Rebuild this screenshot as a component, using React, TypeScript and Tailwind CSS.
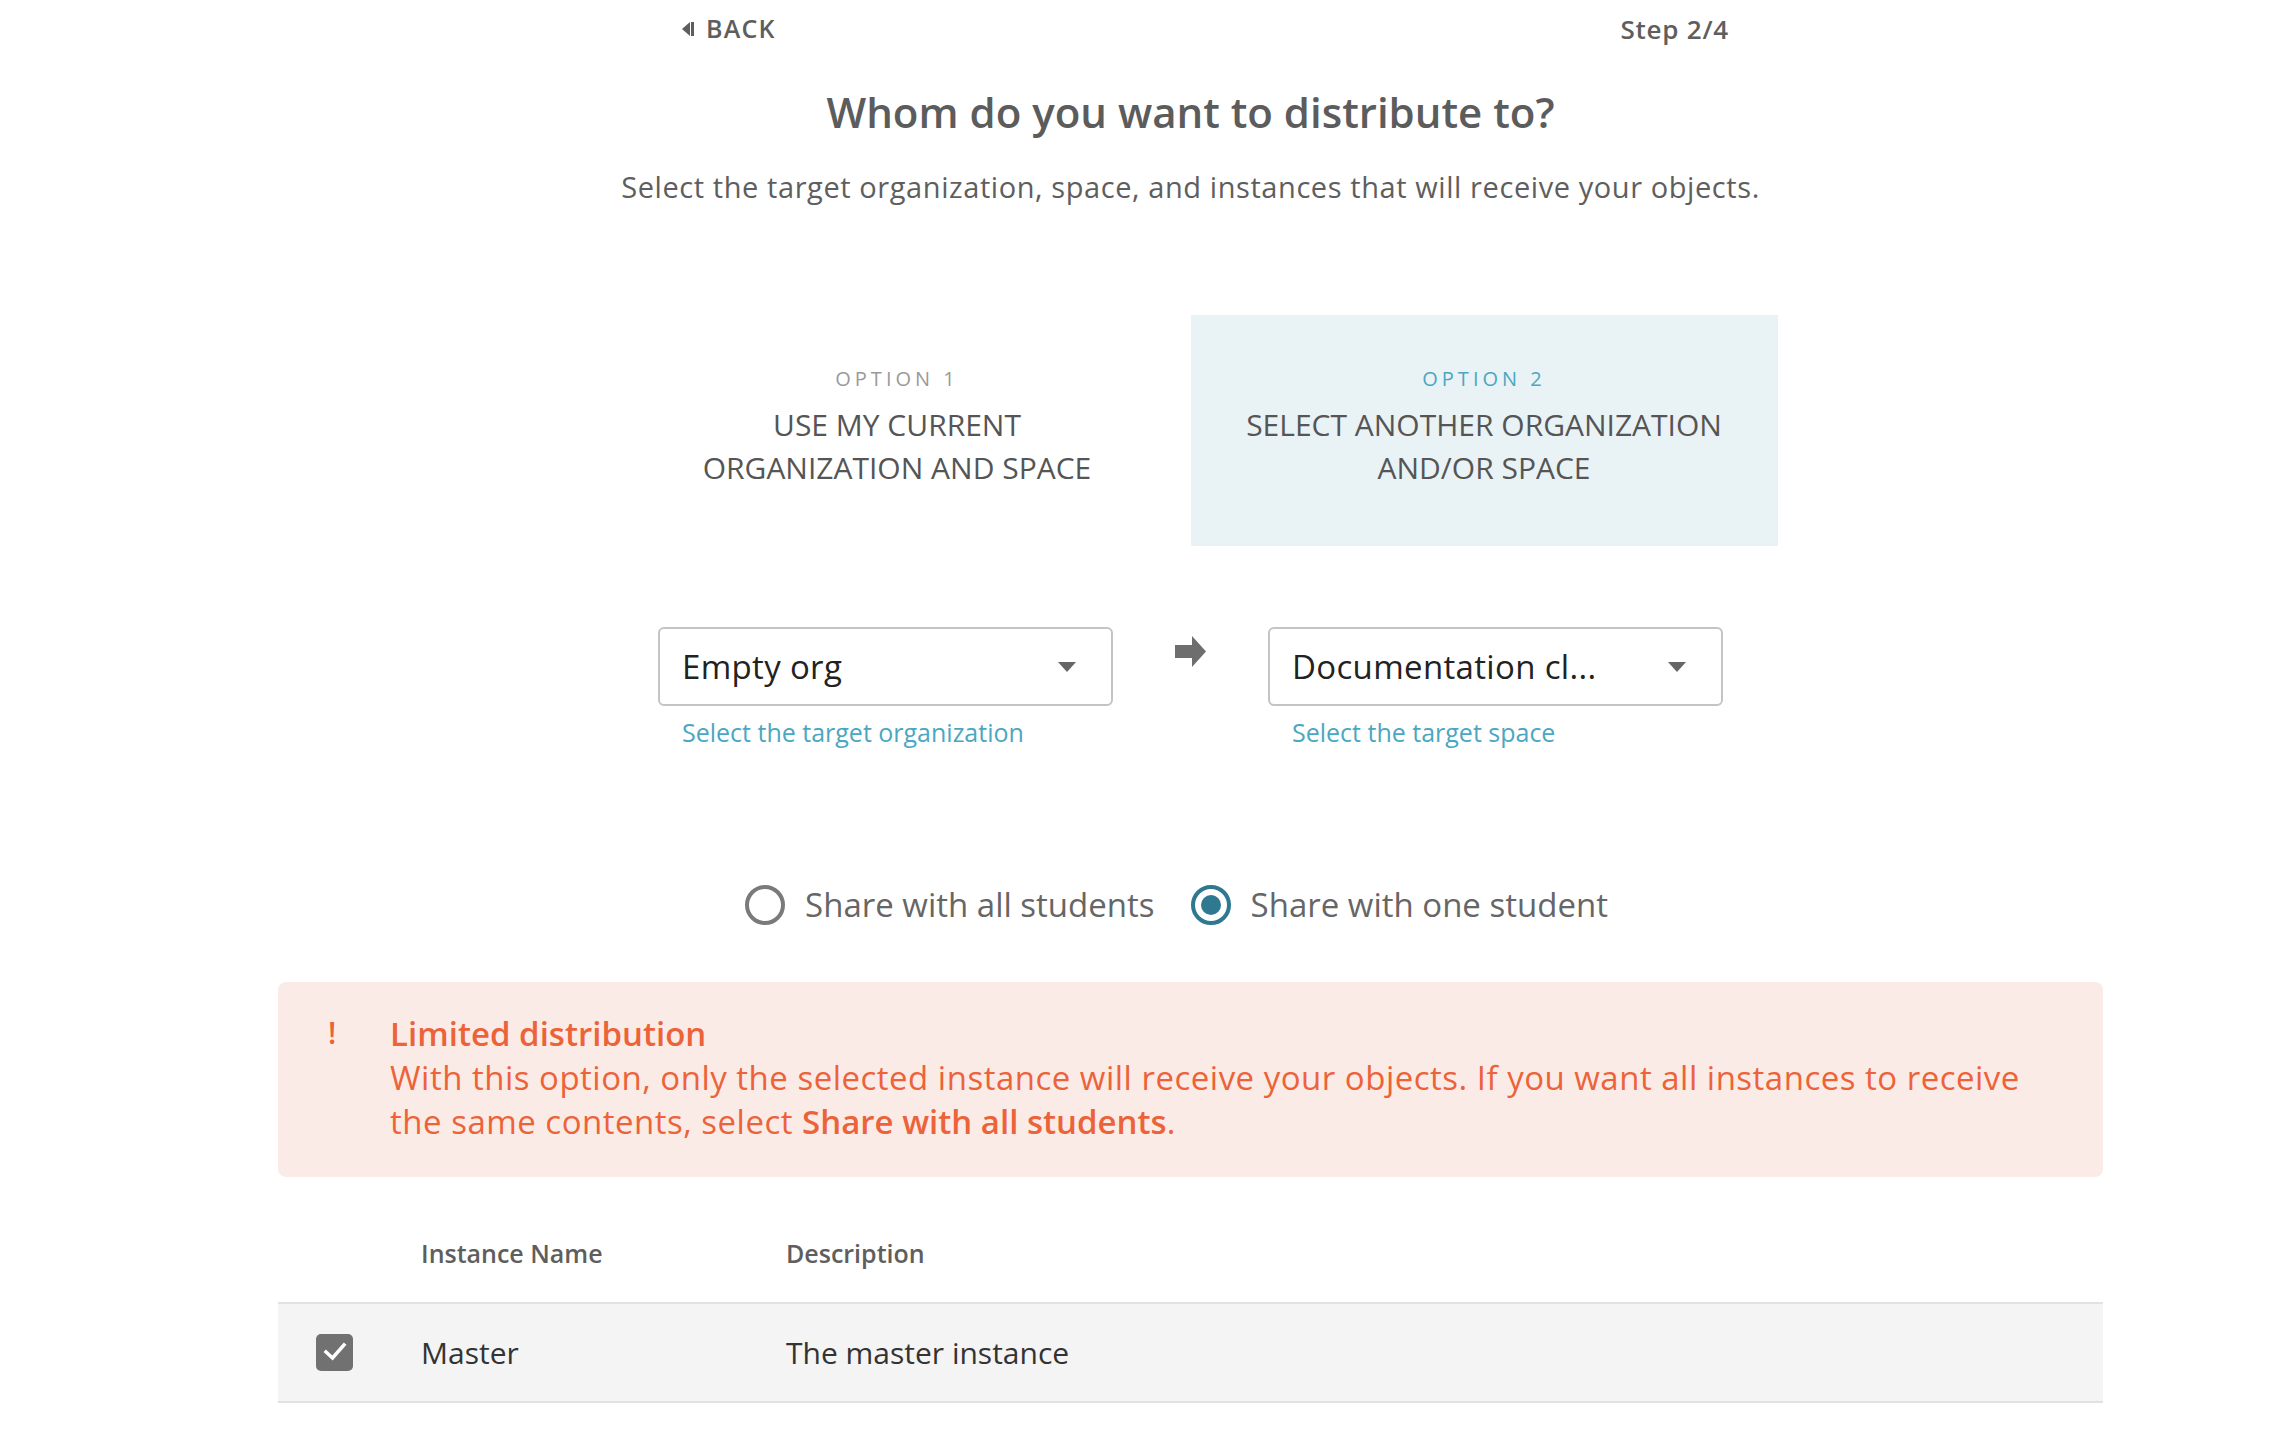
import React from "react";

const font = { fontFamily: '"Open Sans", "Noto Sans", sans-serif' };

function Caret() {
  return (
    <svg width="18" height="10" viewBox="0 0 18 10" className="shrink-0">
      <path d="M0 0 H18 L9 10 Z" fill="#666" />
    </svg>
  );
}

function Dropdown({ value, help }: { value: string; help: string }) {
  return (
    <div className="flex flex-col w-[455px]">
      <div className="h-[79px] border-2 border-[#c4c4c4] rounded-[6px] flex items-center justify-between pl-[22px] pr-[35px] bg-white">
        <span className="text-[33px] tracking-[0.01em] text-[#222]">{value}</span>
        <Caret />
      </div>
      <div className="pl-[24px] mt-[9px] text-[25px] leading-[34px] text-[#4ba7c1]">{help}</div>
    </div>
  );
}

export default function App() {
  return (
    <div className="min-h-screen w-full bg-white text-[#5e5e5e]" style={font}>
      <div className="ml-[278px] w-[1825px] flex flex-col">
        {/* header */}
        <div className="flex justify-between items-center pl-[404px] pr-[374px] pt-[14px] h-[44px]">
          <div className="flex items-center gap-[12px] text-[25px] font-semibold text-[#5e5e5e] tracking-[0.05em]">
            <svg width="12" height="16" viewBox="0 0 12 16">
              <path d="M0 8 L8 1 V15 Z" fill="#5e5e5e" />
              <rect x="9" y="1" width="3" height="14" fill="#5e5e5e" />
            </svg>
            <span>BACK</span>
          </div>
          <div className="text-[26px] font-semibold text-[#5e5e5e] tracking-[0.03em]">Step 2/4</div>
        </div>

        <h1 className="text-center text-[42px] font-semibold text-[#5c5c5c] mt-[41px] leading-[54px]">
          Whom do you want to distribute to?
        </h1>
        <p className="text-center text-[29px] tracking-[0.02em] text-[#5e5e5e] mt-[30px] leading-[36px]">
          Select the target organization, space, and instances that will receive your objects.
        </p>

        {/* options */}
        <div className="flex justify-center mt-[110px]">
          <div className="w-[587px] h-[231px] flex flex-col items-center pt-[50px]">
            <div className="text-[20px] tracking-[0.2em] text-[#9a9a9a] leading-[28px]">OPTION 1</div>
            <div className="mt-[10px] text-[30px] leading-[43px] text-[#555] text-center">
              USE MY CURRENT
              <br />
              ORGANIZATION AND SPACE
            </div>
          </div>
          <div className="w-[587px] h-[231px] flex flex-col items-center pt-[50px] bg-[#e9f2f5]">
            <div className="text-[20px] tracking-[0.2em] text-[#4ba7c1] leading-[28px]">OPTION 2</div>
            <div className="mt-[10px] text-[30px] leading-[43px] text-[#555] text-center">
              SELECT ANOTHER ORGANIZATION
              <br />
              AND/OR SPACE
            </div>
          </div>
        </div>

        {/* dropdowns */}
        <div className="flex justify-center items-start mt-[81px] gap-[62px]">
          <Dropdown value="Empty org" help="Select the target organization" />
          <svg width="31" height="31" viewBox="0 0 31 31" className="mt-[9px] shrink-0">
            <path d="M0 9 H17 V0 L31 15.5 L17 31 V22 H0 Z" fill="#6e6e6e" />
          </svg>
          <Dropdown value="Documentation cl..." help="Select the target space" />
        </div>

        {/* radios */}
        <div className="flex justify-center items-center mt-[131px] gap-[36px] pr-[28px]">
          <label className="flex items-center gap-[20px]">
            <span className="w-[40px] h-[40px] rounded-full border-[4px] border-[#7a7a7a] bg-white" />
            <span className="text-[33px] text-[#666]">Share with all students</span>
          </label>
          <label className="flex items-center gap-[20px]">
            <span className="w-[40px] h-[40px] rounded-full border-[4px] border-[#2e7890] flex items-center justify-center">
              <span className="w-[20px] h-[20px] rounded-full bg-[#2e7890]" />
            </span>
            <span className="text-[33px] text-[#666]">Share with one student</span>
          </label>
        </div>

        {/* alert */}
        <div className="mt-[52px] rounded-[8px] bg-[#fbebe6] flex pt-[22px] pb-[33px] pl-[50px] pr-[40px] text-[#ec6339]">
          <div className="w-[61px] text-[30px] font-semibold leading-[44px] pt-[7px]">!</div>
          <div className="flex flex-col text-[33px] tracking-[0.015em] leading-[44px] pl-[20px]">
            <div className="font-semibold tracking-normal mt-[8px]">Limited distribution</div>
            <div>
              With this option, only the selected instance will receive your objects. If you want all instances to receive
              the same contents, select <span className="font-semibold tracking-normal">Share with all students</span>.
            </div>
          </div>
        </div>

        {/* table */}
        <div className="mt-[29px] flex flex-col">
          <div className="h-[98px] flex items-center border-b-2 border-[#e2e2e2] text-[25px] font-semibold text-[#5e5e5e]">
            <div className="w-[143px]" />
            <div className="w-[365px]">Instance Name</div>
            <div>Description</div>
          </div>
          <div className="h-[99px] flex items-center bg-[#f4f4f4] border-b-2 border-[#e2e2e2] text-[30px] text-[#333]">
            <div className="w-[143px] pl-[38px]">
              <div className="w-[37px] h-[37px] rounded-[5px] bg-[#717171] flex items-center justify-center">
                <svg width="24" height="20" viewBox="0 0 24 20">
                  <path d="M3 10 L9.5 16 L21 3" fill="none" stroke="white" strokeWidth="3.5" strokeLinecap="square" />
                </svg>
              </div>
            </div>
            <div className="w-[365px]">Master</div>
            <div>The master instance</div>
          </div>
        </div>
      </div>
    </div>
  );
}
